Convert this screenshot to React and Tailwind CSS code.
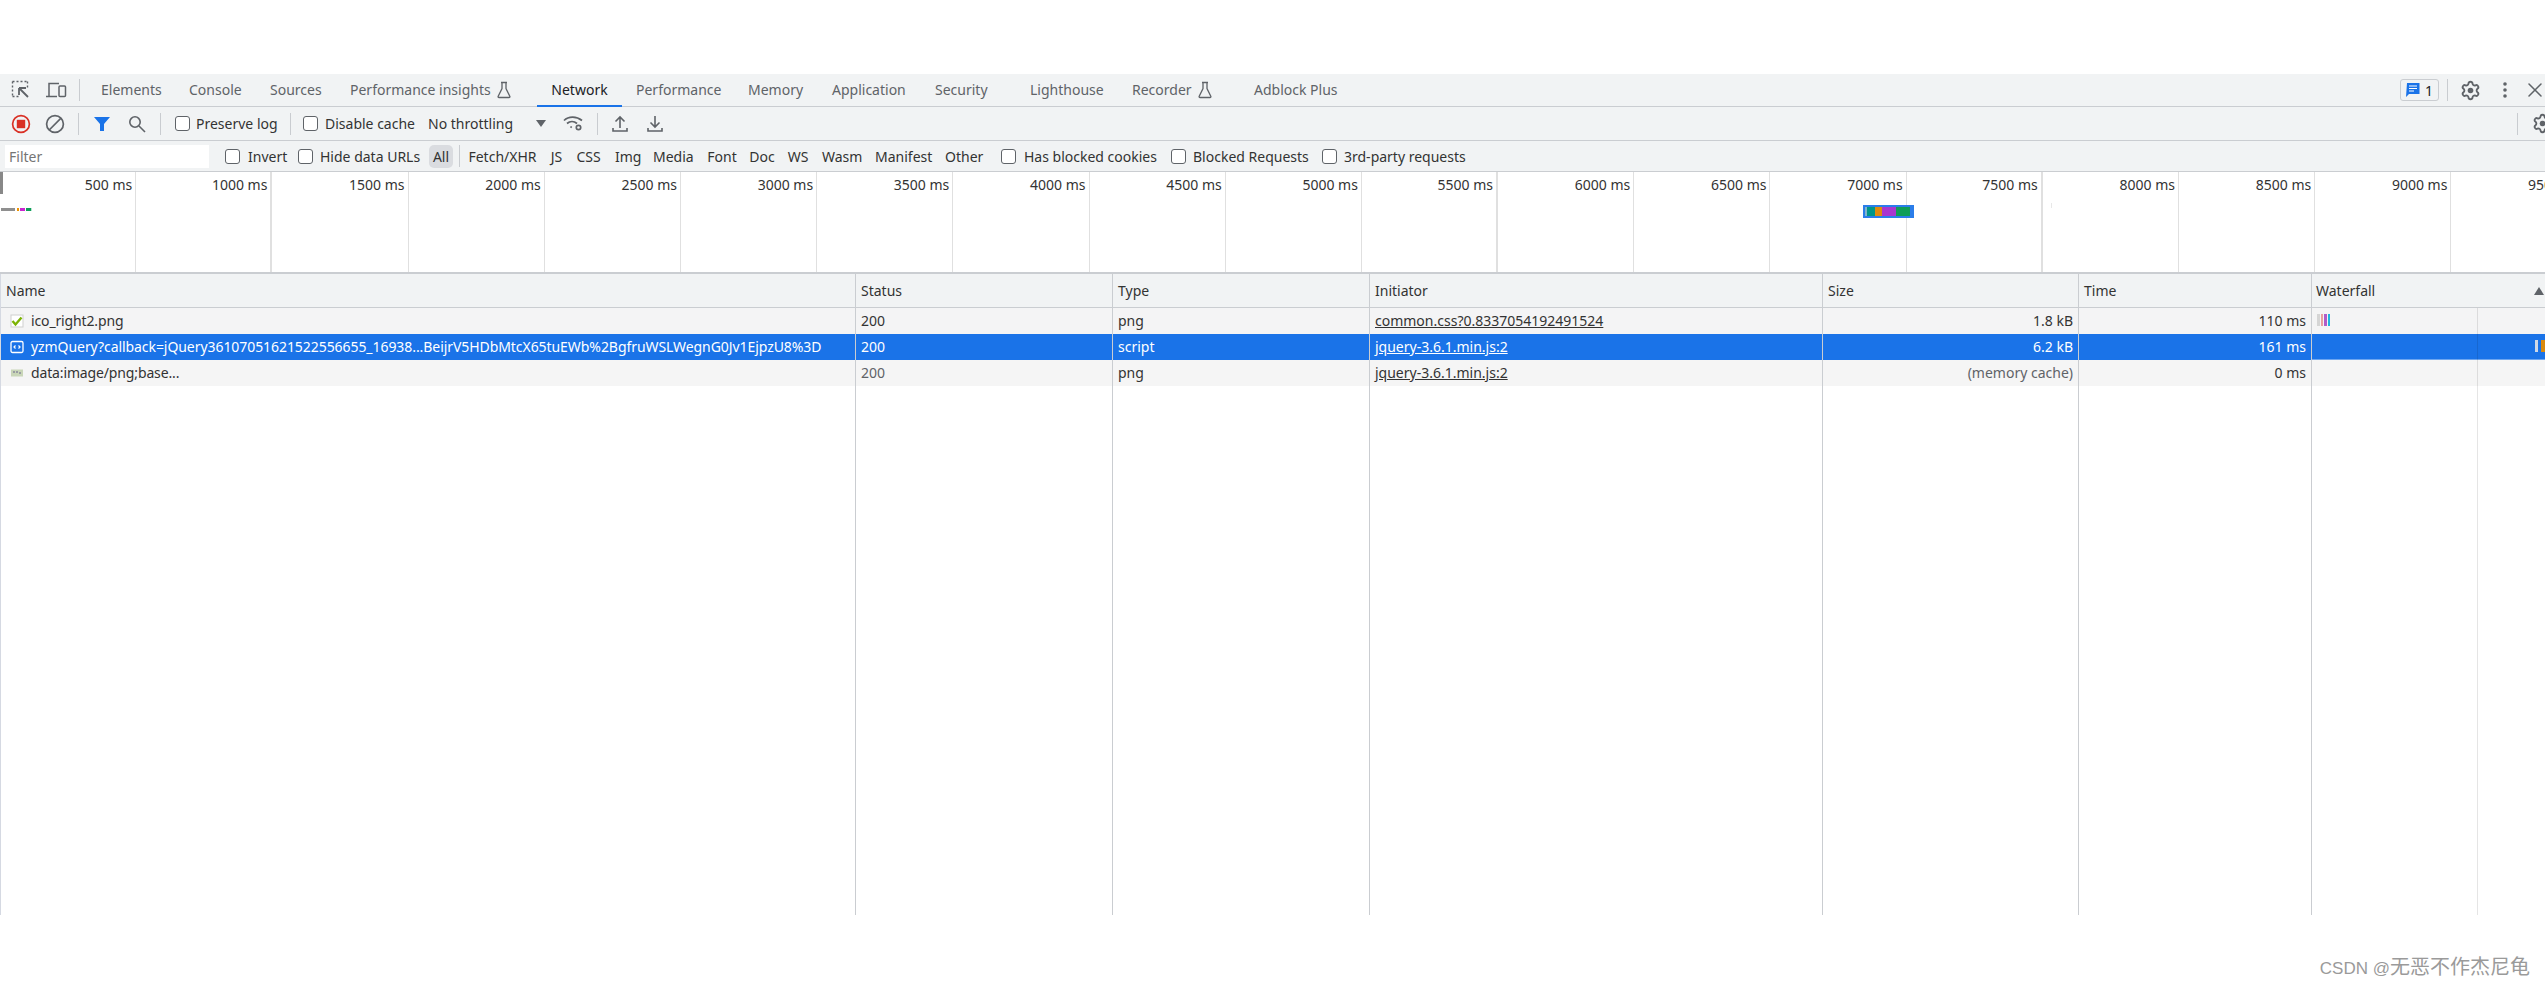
import React from 'react';
import { X } from 'lucide-react';

const Sep = ({ className = '' }) => <div className={`w-px h-[22px] bg-[#c9ccd0] shrink-0 ${className}`} />;

const Flask = () => (
  <svg width="14" height="18" viewBox="0 0 14 18" fill="none" stroke="#5f6368" strokeWidth="1.3" className="shrink-0">
    <path d="M4 1.5h6M5 1.5v6L1.2 15.2c-.4.8.1 1.3.8 1.3h10c.7 0 1.2-.5.8-1.3L9 7.5v-6" />
  </svg>
);

const Gear = ({ className = '' }) => (
  <svg width="21" height="21" viewBox="0 0 24 24" fill="none" stroke="#5f6368" strokeWidth="2.1" className={`shrink-0 ${className}`}>
    <path d="M9.671 4.136a2.34 2.34 0 0 1 4.659 0 2.34 2.34 0 0 0 3.319 1.915 2.34 2.34 0 0 1 2.33 4.033 2.34 2.34 0 0 0 0 3.831 2.34 2.34 0 0 1-2.33 4.033 2.34 2.34 0 0 0-3.319 1.915 2.34 2.34 0 0 1-4.659 0 2.34 2.34 0 0 0-3.32-1.915 2.34 2.34 0 0 1-2.33-4.033 2.34 2.34 0 0 0 0-3.831A2.34 2.34 0 0 1 6.35 6.051a2.34 2.34 0 0 0 3.319-1.915" />
    <circle cx="12" cy="12" r="3.2" fill="#5f6368" stroke="none" />
  </svg>
);

const Tab = ({ className, children }) => (
  <div className={`flex items-center shrink-0 h-full pb-px text-[#5f6368] ${className}`}>{children}</div>
);

const Check = ({ className = '' }) => (
  <div className={`w-[15px] h-[15px] rounded-[3px] border border-[#5f6368] bg-white shrink-0 ${className}`} />
);

const TabBar = () => (
  <div className="h-[33px] flex items-center bg-[#f1f3f4] border-b border-[#cacdd1] shrink-0">
    <svg width="20" height="20" viewBox="0 0 20 20" fill="none" stroke="#5f6368" className="ml-[11px] shrink-0">
      <path d="M1.5 1.5h15M1.5 1.5v15M1.5 16.5h6M16.5 1.5v6" strokeDasharray="2 2" strokeWidth="1.4" />
      <path d="M8 8v7M8 8h7M8 8l9 9" strokeWidth="1.8" />
    </svg>
    <svg width="22" height="18" viewBox="0 0 22 18" fill="none" stroke="#5f6368" strokeWidth="1.5" className="ml-[14px] shrink-0">
      <path d="M4 15V2.5h10M1 15.5h11" />
      <rect x="14" y="5" width="6.5" height="10.5" rx="1" />
    </svg>
    <Sep className="ml-[12px] mr-[21px]" />
    <Tab className="w-[88px]">Elements</Tab>
    <Tab className="w-[81px]">Console</Tab>
    <Tab className="w-[80px]">Sources</Tab>
    <Tab className="w-[187px] gap-[6px]">Performance insights <Flask /></Tab>
    <div className="w-[85px] h-full flex items-center justify-center text-[#202124] border-b-[2px] border-[#1a73e8] shrink-0 mt-px">Network</div>
    <Tab className="w-[112px] ml-[14px]">Performance</Tab>
    <Tab className="w-[84px]">Memory</Tab>
    <Tab className="w-[103px]">Application</Tab>
    <Tab className="w-[95px]">Security</Tab>
    <Tab className="w-[102px]">Lighthouse</Tab>
    <Tab className="w-[122px] gap-[6px]">Recorder <Flask /></Tab>
    <Tab className="w-[100px]">Adblock Plus</Tab>
    <div className="ml-auto flex items-center shrink-0 w-[145px] h-full overflow-hidden">
      <div className="w-[39px] h-[22px] border border-[#cacdd1] rounded-[3px] flex items-center justify-center gap-[5px] text-[#202124] shrink-0">
        <svg width="14" height="16" viewBox="0 0 14 16" className="shrink-0">
          <path d="M1 1h12.5v11H3l-3 3z" fill="#1a73e8" />
          <path d="M3 4h8M3 6.5h8M3 9h5" stroke="#fff" strokeWidth="1" />
        </svg>
        1
      </div>
      <Sep className="ml-[8px]" />
      <Gear className="ml-[12px]" />
      <svg width="6" height="16" viewBox="0 0 6 16" fill="#5f6368" className="ml-[21px] shrink-0">
        <circle cx="3" cy="2" r="1.8" />
        <circle cx="3" cy="8" r="1.8" />
        <circle cx="3" cy="14" r="1.8" />
      </svg>
      <X size={24} color="#5f6368" strokeWidth={1.5} className="ml-[15px] shrink-0" />
    </div>
  </div>
);

const Toolbar = () => (
  <div className="h-[34px] flex items-center bg-[#f1f3f4] border-b border-[#cacdd1] shrink-0 text-[#333]">
    <svg width="20" height="20" viewBox="0 0 20 20" className="ml-[11px] shrink-0">
      <circle cx="10" cy="10" r="8.4" fill="none" stroke="#d93025" strokeWidth="1.7" />
      <rect x="5.8" y="5.8" width="8.4" height="8.4" fill="#d93025" />
    </svg>
    <svg width="20" height="20" viewBox="0 0 20 20" fill="none" stroke="#5f6368" strokeWidth="1.7" className="ml-[14px] shrink-0">
      <circle cx="10" cy="10" r="8.4" />
      <path d="M4.2 16L16 4.2" />
    </svg>
    <Sep className="ml-[13px]" />
    <svg width="16" height="16" viewBox="0 0 16 16" fill="#1a73e8" className="ml-[15px] shrink-0">
      <path d="M0 1h16L10 8v7H6V8z" />
    </svg>
    <svg width="18" height="18" viewBox="0 0 18 18" fill="none" stroke="#5f6368" strokeWidth="1.6" className="ml-[18px] shrink-0">
      <circle cx="7" cy="7" r="5.2" />
      <path d="M11 11l6 6" />
    </svg>
    <Sep className="ml-[14px] mr-[14px]" />
    <Check />
    <span className="ml-[6px] w-[94px] shrink-0">Preserve log</span>
    <Sep />
    <Check className="ml-[12px]" />
    <span className="ml-[7px] w-[103px] shrink-0">Disable cache</span>
    <span className="w-[108px] shrink-0">No throttling</span>
    <div className="w-0 h-0 border-l-[5px] border-r-[5px] border-t-[7px] border-l-transparent border-r-transparent border-t-[#5f6368] shrink-0" />
    <svg width="21" height="17" viewBox="0 0 21 17" fill="none" stroke="#5f6368" strokeWidth="1.7" className="ml-[17px] shrink-0">
      <path d="M1 5.5C5.5 1 13.500 1 19 5.500M4 8.500c3-2.700 7-2.700 10 0M7.500 11.500l1.200 1.200" />
      <circle cx="15.500" cy="12.500" r="2.200" strokeWidth="1.700" />
    </svg>
    <Sep className="ml-[13px]" />
    <svg width="18" height="18" viewBox="0 0 18 18" fill="none" stroke="#5f6368" strokeWidth="1.6" className="ml-[13px] shrink-0">
      <path d="M9 13V2M4.500 6.500L9 2l4.500 4.500M2 13v3h14v-3" />
    </svg>
    <svg width="18" height="18" viewBox="0 0 18 18" fill="none" stroke="#5f6368" strokeWidth="1.6" className="ml-[17px] shrink-0">
      <path d="M9 1v11M4.500 7.500L9 12l4.500-4.500M2 13v3h14v-3" />
    </svg>
    <div className="ml-auto flex items-center w-[28px] shrink-0 overflow-hidden">
      <Sep />
      <Gear className="ml-[14px]" />
    </div>
  </div>
);

const Chip = ({ className, children }) => (
  <div className={`shrink-0 text-center ${className}`}>{children}</div>
);

const FilterBar = () => (
  <div className="h-[31px] flex items-center bg-[#f1f3f4] border-b border-[#cacdd1] shrink-0 text-[#333]">
    <div className="ml-[5px] w-[204px] h-[23px] bg-white flex items-center pl-[4px] text-[#757575] shrink-0">Filter</div>
    <Check className="ml-[16px]" />
    <span className="ml-[8px] w-[50px] shrink-0">Invert</span>
    <Check />
    <span className="ml-[7px] w-[109px] shrink-0">Hide data URLs</span>
    <div className="w-[24px] h-[23px] rounded-[5px] bg-[#dadce0] flex items-center justify-center shrink-0">All</div>
    <Sep className="ml-[6px] mr-[8px]" />
    <Chip className="w-[69px]">Fetch/XHR</Chip>
    <Chip className="w-[13px] ml-[13px]">JS</Chip>
    <Chip className="w-[25px] ml-[13px]">CSS</Chip>
    <Chip className="w-[24px] ml-[14px]">Img</Chip>
    <Chip className="w-[40px] ml-[14px]">Media</Chip>
    <Chip className="w-[30px] ml-[14px]">Font</Chip>
    <Chip className="w-[26px] ml-[12px]">Doc</Chip>
    <Chip className="w-[22px] ml-[12px]">WS</Chip>
    <Chip className="w-[40px] ml-[13px]">Wasm</Chip>
    <Chip className="w-[57px] ml-[13px]">Manifest</Chip>
    <Chip className="w-[38px] ml-[13px]">Other</Chip>
    <Check className="ml-[18px]" />
    <span className="ml-[8px] w-[147px] shrink-0">Has blocked cookies</span>
    <Check />
    <span className="ml-[7px] w-[129px] shrink-0">Blocked Requests</span>
    <Check />
    <span className="ml-[7px] shrink-0">3rd-party requests</span>
  </div>
);

const ticks = [
  ['500 ms', 'border-[#e0e0e0]'],
  ['1000 ms', 'border-r-2 border-[#e0e0e0]'],
  ['1500 ms', 'border-[#e0e0e0]'],
  ['2000 ms', 'border-[#e0e0e0]'],
  ['2500 ms', 'border-[#e0e0e0]'],
  ['3000 ms', 'border-[#e0e0e0]'],
  ['3500 ms', 'border-[#e0e0e0]'],
  ['4000 ms', 'border-[#e0e0e0]'],
  ['4500 ms', 'border-[#e0e0e0]'],
  ['5000 ms', 'border-[#e0e0e0]'],
  ['5500 ms', 'border-r-2 border-[#e0e0e0]'],
  ['6000 ms', 'border-[#e0e0e0]'],
  ['6500 ms', 'border-[#e0e0e0]'],
  ['7000 ms', 'border-[#e0e0e0]'],
  ['7500 ms', 'border-r-2 border-[#e0e0e0]'],
  ['8000 ms', 'border-[#e0e0e0]'],
  ['8500 ms', 'border-[#e0e0e0]'],
  ['9000 ms', 'border-[#e0e0e0]'],
  ['9500 ms', 'border-[#e0e0e0]'],
];

const Overview = () => (
  <div className="relative h-[102px] flex bg-white border-b-2 border-[#cacdd1] shrink-0 overflow-hidden text-[#333]">
    {ticks.map(([label, line]) => (
      <div key={label} className={`w-[136.2px] shrink-0 h-full border-r text-right pr-[3px] pt-[2px] ${line}`}>
        {label}
      </div>
    ))}
    {/* selection grip + the request bars that sit on top of the grid */}
    <div className="absolute left-0 top-0 w-[3px] h-[22px] bg-[#888]" />
    <div className="absolute left-[1px] top-[36px] flex h-[3px] w-[31px]">
      <div className="w-[14px] bg-[#8f8f8f]" />
      <div className="w-[2px] ml-[2px] bg-[#f09300]" />
      <div className="w-[5px] ml-[1px] bg-[#c926d0]" />
      <div className="w-[5px] ml-[1px] bg-[#0f9d58]" />
      <div className="w-[1px] bg-[#b7e4d0]" />
    </div>
    <div className="absolute left-[1863px] top-[33px] w-[51px] h-[13px] border-2 border-[#2b7de9] bg-[#2b7de9] flex">
      <div className="w-[2px] bg-[#7fb4ce]" />
      <div className="w-[8px] bg-[#009688]" />
      <div className="w-[7px] bg-[#e08a0c]" />
      <div className="w-[14px] bg-[#a936cf]" />
      <div className="w-[14px] bg-[#0f9d58]" />
    </div>
    <div className="absolute left-[2051px] top-[31px] w-px h-[5px] bg-[#e8e8e8]" />
  </div>
);

const rowBg = ['bg-[#f4f4f5]', 'bg-[#1a73e8] text-white', 'bg-[#f5f5f5]'];

// table is built column by column so the dividers run down through the empty area
const Column = ({ title, className = '', cells, cellClass = '' }) => (
  <div className={`flex flex-col h-full shrink-0 border-r border-[#cacdd1] ${className}`}>
    <div className="h-[34px] flex items-center px-[5px] bg-[#f1f3f4] border-b border-[#cacdd1] text-[#333] shrink-0">
      {title}
    </div>
    {cells.map((cell, i) => (
      <div
        key={i}
        className={`h-[26px] flex items-center px-[5px] pb-px whitespace-nowrap overflow-hidden shrink-0 ${rowBg[i]} ${i === 1 ? 'text-white' : 'text-[#333]'} ${cellClass}`}
      >
        {cell}
      </div>
    ))}
  </div>
);

const PngIcon = () => (
  <svg width="14" height="14" viewBox="0 0 14 14" className="mr-[7px] ml-[4px] shrink-0">
    <rect x="1" y="1" width="12" height="12" fill="#fff" stroke="#cfcfcf" />
    <path d="M2.500 7l3 3.500L11.500 3.500" fill="none" stroke="#7cb305" strokeWidth="2.400" />
  </svg>
);

const ScriptIcon = () => (
  <svg width="14" height="14" viewBox="0 0 14 14" fill="none" stroke="#fff" className="mr-[7px] ml-[4px] shrink-0">
    <rect x="1" y="1.500" width="12" height="11" rx="1.500" strokeWidth="1.300" />
    <path d="M5.500 5.500L4 7l1.500 1.500M8.500 5.500L10 7 8.500 8.500" strokeWidth="1.200" />
  </svg>
);

const DataIcon = () => (
  <svg width="14" height="14" viewBox="0 0 14 14" className="mr-[7px] ml-[4px] shrink-0">
    <rect x="1" y="3.500" width="12" height="7" fill="#c9d6b8" />
    <path d="M3 6h2M6 6h2M9 7h2" stroke="#8a8a9a" strokeWidth="1.300" />
  </svg>
);

const Waterfall = () => (
  <div className="relative flex-1 h-full">
    <div className="h-[34px] flex items-center justify-between pl-[4px] pr-[1px] bg-[#f1f3f4] border-b border-[#cacdd1] text-[#333]">
      Waterfall
      <div className="w-0 h-0 border-l-[5px] border-r-[5px] border-b-[8px] border-l-transparent border-r-transparent border-b-[#5f6368]" />
    </div>
    <div className="h-[26px] bg-[#f4f4f5] flex items-start pt-[6px] pl-[5px] gap-px">
      <div className="w-[3px] h-[12px] bg-[#d5d5d5]" />
      <div className="w-[2px] h-[12px] bg-[#e8a0a0]" />
      <div className="w-[3px] h-[12px] bg-[#b05cc9]" />
      <div className="w-[2px] h-[12px] bg-[#1fb6e0]" />
    </div>
    <div className="h-[26px] bg-[#1a73e8] border-b border-[#6ea6f0] flex items-start justify-end pt-[6px] gap-[3px]">
      <div className="w-[3px] h-[12px] bg-[#cfd8e6]" />
      <div className="w-[4px] h-[12px] bg-[#d98a10]" />
    </div>
    <div className="h-[26px] bg-[#f5f5f5]" />
    <div className="absolute left-[165px] top-[34px] bottom-0 w-px bg-[#0000001a]" />
  </div>
);

const Table = () => (
  <div className="flex h-[641px] bg-white shrink-0 border-l border-[#d5d9e2] overflow-hidden">
    <Column
      title="Name"
      className="w-[855px]"
      cells={[
        <><PngIcon /><span className="tracking-[-0.14px]">ico_right2.png</span></>,
        <><ScriptIcon /><span className="tracking-[-0.065px]">yzmQuery?callback=jQuery36107051621522556655_16938...BeijrV5HDbMtcX65tuEWb%2BgfruWSLWegnG0Jv1EjpzU8%3D</span></>,
        <><DataIcon /><span className="tracking-[-0.14px]">data:image/png;base...</span></>,
      ]}
    />
    <Column title="Status" className="w-[257px]" cells={['200', '200', <span className="text-[#5f6368]">200</span>]} />
    <Column title="Type" className="w-[257px]" cells={['png', 'script', 'png']} />
    <Column
      title="Initiator"
      className="w-[453px]"
      cellClass="underline"
      cells={['common.css?0.8337054192491524', 'jquery-3.6.1.min.js:2', 'jquery-3.6.1.min.js:2']}
    />
    <Column
      title="Size"
      className="w-[256px]"
      cellClass="justify-end"
      cells={['1.8 kB', '6.2 kB', <span className="text-[#5f6368]">(memory cache)</span>]}
    />
    <Column title="Time" className="w-[233px]" cellClass="justify-end" cells={['110 ms', '161 ms', '0 ms']} />
    <Waterfall />
  </div>
);

export default function App() {
  return (
    <div className="relative w-[2545px] h-[989px] overflow-hidden bg-white text-[14px] [font-family:'Noto_Sans',sans-serif]">
      <div className="h-[74px]" />
      <TabBar />
      <Toolbar />
      <FilterBar />
      <Overview />
      <Table />
      <div className="absolute right-[15px] bottom-[8px] flex items-baseline text-[#9a9a9a] [font-family:'Liberation_Sans','Noto_Sans_CJK_SC',sans-serif]">
        <span className="text-[17px]">CSDN @</span>
        <span className="text-[20px] [font-family:'Noto_Sans_CJK_SC',sans-serif]">无恶不作杰尼龟</span>
      </div>
    </div>
  );
}
